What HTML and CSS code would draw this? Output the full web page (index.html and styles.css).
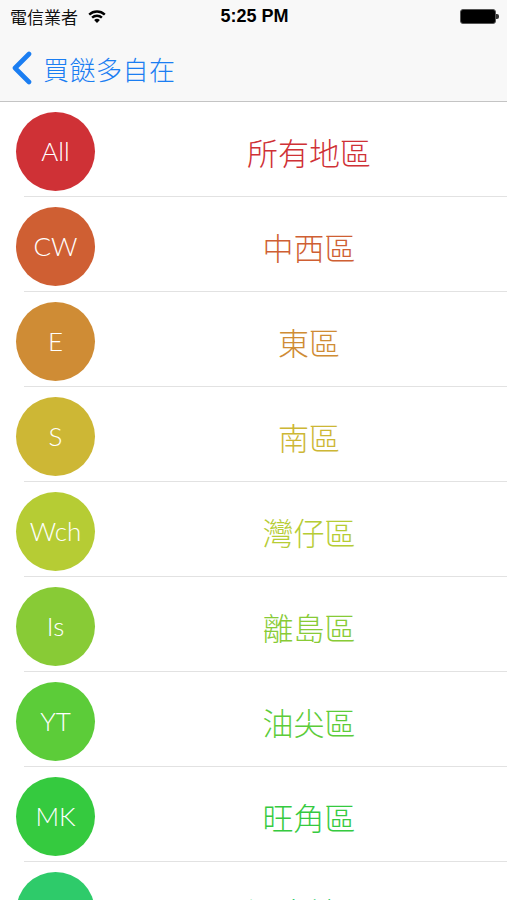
FILE: index.html
```html
<!DOCTYPE html>
<html>
	<head>
		<meta charset="UTF-8">
		<title>買餸多自在</title>
		<link rel="stylesheet" href="styles.css">
	</head>
	<body>
		<div class="top">
			<div class="status">
				<div class="carrier">
					電信業者
					<svg class="wifi" width="20" height="14" viewBox="0 0 20 14">
						<path d="M2.2 5.6 A11.5 11.5 0 0 1 17.8 5.6" fill="none" stroke="#000" stroke-width="2.4"/>
						<path d="M5.1 8.7 A7 7 0 0 1 14.9 8.7" fill="none" stroke="#000" stroke-width="2.4"/>
						<path d="M10 14 L7.1 11.1 A4.1 4.1 0 0 1 12.9 11.1 Z" fill="#000"/>
					</svg>
				</div>
				<div class="time">5:25 PM</div>
				<div class="battery"><span class="cell"></span></div>
			</div>
			<div class="nav">
				<svg class="back" width="22" height="34" viewBox="0 0 22 34">
					<polyline points="18,3 4,17 18,31" fill="none" stroke="#1b7ef2" stroke-width="4.6" stroke-linecap="round" stroke-linejoin="round"/>
				</svg>
				<span class="title">買餸多自在</span>
			</div>
		</div>

		<ul class="list">
			<li class="row" style="color: #cf3136"><span class="badge" style="background-color: #cf3136">All</span><span class="name">所有地區</span></li>
			<li class="row" style="color: #cf5f33"><span class="badge" style="background-color: #cf5f33">CW</span><span class="name">中西區</span></li>
			<li class="row" style="color: #cf8c35"><span class="badge" style="background-color: #cf8c35">E</span><span class="name">東區</span></li>
			<li class="row" style="color: #cdb735"><span class="badge" style="background-color: #cdb735">S</span><span class="name">南區</span></li>
			<li class="row" style="color: #b6cc34"><span class="badge" style="background-color: #b6cc34">Wch</span><span class="name">灣仔區</span></li>
			<li class="row" style="color: #88cb36"><span class="badge" style="background-color: #88cb36">Is</span><span class="name">離島區</span></li>
			<li class="row" style="color: #5ccc39"><span class="badge" style="background-color: #5ccc39">YT</span><span class="name">油尖區</span></li>
			<li class="row" style="color: #35ca3f"><span class="badge" style="background-color: #35ca3f">MK</span><span class="name">旺角區</span></li>
			<li class="row" style="color: #2ecb6a"><span class="badge" style="background-color: #2ecb6a">SSP</span><span class="name">深水埗區</span></li>
		</ul>
	</body>
</html>
```

FILE: styles.css
```css
*{
	margin: 0;
	padding: 0;
}
html, body{
	background-color: #fff;
	overflow: hidden;
}
body{
	width: 507px;
	font-family: "Noto Sans CJK TC", sans-serif;
}

/* status bar + nav */
.top{
	background-color: #f8f8f8;
	border-bottom: 1px solid #c4c4c4;
}
.status{
	height: 32px;
	display: grid;
	grid-template-columns: 1fr auto 1fr;
	align-items: center;
	padding: 0 8px 0 10px;
}
.carrier{
	display: flex;
	align-items: center;
	font-family: "Noto Sans CJK TC", sans-serif;
	font-size: 17px;
	color: #111;
}
.wifi{
	margin-left: 9px;
	margin-top: -1px;
}
.time{
	font-family: "Liberation Sans", Arial, sans-serif;
	font-weight: bold;
	font-size: 18px;
	color: #000;
}
.battery{
	justify-self: end;
	display: flex;
	align-items: center;
}
.cell{
	display: block;
	width: 34px;
	height: 13px;
	background-color: #000;
	border: 1px solid #555;
	border-radius: 3px;
}
.battery::after{
	content: "";
	display: block;
	width: 3px;
	height: 5px;
	background-color: #333;
	border-radius: 0 2px 2px 0;
}
.nav{
	height: 66px;
	padding-top: 3px;
	display: flex;
	align-items: center;
	padding-left: 11px;
}
.back{
	display: block;
}
.title{
	margin-left: 10px;
	font-size: 26px;
	font-weight: 300;
	color: #1b7ef2;
	letter-spacing: 0.5px;
}

/* list */
.list{
	list-style: none;
}
.row{
	height: 94px;
	margin-left: 24px;
	border-bottom: 1px solid #e2e2e2;
	display: flex;
	align-items: flex-start;
}
.badge{
	flex: none;
	width: 79px;
	height: 79px;
	margin: 10px 0 0 -8px;
	border-radius: 50%;
	color: #fff;
	font-family: Lato, "Open Sans", sans-serif;
	font-weight: 300;
	font-size: 26px;
	line-height: 79px;
	text-align: center;
}
.name{
	flex: 1;
	margin: 10px 0 0 16px;
	height: 79px;
	line-height: 79px;
	text-align: center;
	font-size: 31px;
	font-weight: 300;
}
```
